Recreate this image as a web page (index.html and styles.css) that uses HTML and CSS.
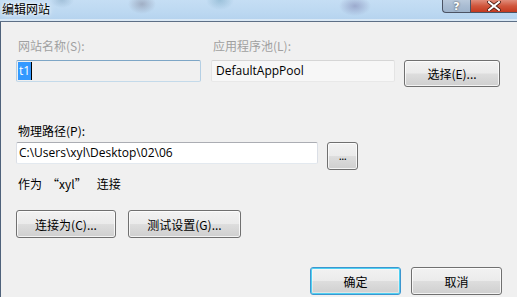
FILE: index.html
```html
<!DOCTYPE html>
<html lang="zh-CN">
<head>
<meta charset="utf-8">
<title>编辑网站</title>
<link rel="stylesheet" href="styles.css">
</head>
<body>
<div class="window">
  <div class="titlebar">
    <span class="title">编辑网站</span>
    <div class="caption-buttons">
      <div class="cap-btn cap-help">?</div>
      <div class="cap-btn cap-close">
        <svg width="14" height="10" viewBox="0 0 14 10"><path d="M2 1 L12 9 M12 1 L2 9" stroke="#4a1a10" stroke-width="3.6" stroke-linecap="square"/><path d="M2 1 L12 9 M12 1 L2 9" stroke="#ffffff" stroke-width="2" stroke-linecap="square"/></svg>
      </div>
    </div>
  </div>
  <div class="client">
    <div class="top-grid">
      <div class="label disabled">网站名称(S):</div>
      <div class="label disabled">应用程序池(L):</div>
      <div></div>
      <div class="textbox tb-disabled"><span class="sel">t1</span><span class="caret"></span></div>
      <div class="textbox tb-readonly">DefaultAppPool</div>
      <button class="btn btn-select">选择(E)...</button>
    </div>

    <div class="label path-label">物理路径(P):</div>
    <div class="path-row">
      <div class="textbox tb-path">C:\Users\xyl\Desktop\02\06</div>
      <button class="btn btn-browse"><span class="dots">...</span></button>
    </div>

    <div class="label connect-label">作为<span class="q-open">“</span>xyl<span class="q-close">”</span>连接</div>

    <div class="action-row">
      <button class="btn btn-connect">连接为(C)...</button>
      <button class="btn btn-test">测试设置(G)...</button>
    </div>

    <div class="footer">
      <button class="btn btn-ok btn-default">确定</button>
      <button class="btn btn-ok">取消</button>
    </div>
  </div>
</div>
</body>
</html>
```

FILE: styles.css
```css
* { box-sizing: border-box; }
html, body {
  margin: 0;
  padding: 0;
  width: 517px;
  height: 297px;
  overflow: hidden;
  background: #f0f0f0;
}
body {
  font-family: "Open Sans", "Noto Sans CJK SC", sans-serif;
  font-size: 12px;
  color: #000;
}
.window {
  width: 517px;
  height: 297px;
  display: flex;
  flex-direction: column;
}
.titlebar {
  height: 22px;
  flex: none;
  display: flex;
  align-items: flex-start;
  background:
    radial-gradient(ellipse 14px 10px at 142px 4px, rgba(120,120,140,0.45), rgba(120,120,140,0) 100%),
    radial-gradient(ellipse 16px 10px at 355px 6px, rgba(110,110,160,0.45), rgba(110,110,160,0) 100%),
    radial-gradient(ellipse 12px 8px at 62px 0px, rgba(100,140,170,0.35), rgba(100,140,170,0) 100%),
    radial-gradient(ellipse 14px 10px at 220px 0px, rgba(80,140,170,0.35), rgba(80,140,170,0) 100%),
    linear-gradient(#c5def4, #bcd8f1 60%, #b4d2ee);
  border-bottom: 1px solid #5d6f86;
  box-shadow: inset 0 -2px 0 #d9e8f5;
}
.title {
  margin-left: 2px;
  margin-top: 0;
  line-height: 17px;
  font-family: "Noto Sans CJK SC", sans-serif;
  font-size: 12px;
  color: #000;
  text-shadow: 0 0 6px #ffffff, 0 0 3px #ffffff;
}
.caption-buttons {
  margin-left: auto;
  display: flex;
  height: 13px;
}
.cap-btn {
  height: 13px;
  border: 1px solid #4b5364;
  border-top: none;
  display: flex;
  align-items: center;
  justify-content: center;
}
.cap-help {
  width: 28px;
  border-right: none;
  border-bottom-left-radius: 4px;
  background: linear-gradient(#b9c9db, #a9bcd2 50%, #9fb4cc);
  color: #ffffff;
  font-family: "DejaVu Sans", sans-serif;
  font-weight: bold;
  font-size: 11px;
  line-height: 11px;
  text-shadow: 0 0 2px #333;
}
.cap-close {
  width: 47px;
  border-right: none;
  background: linear-gradient(#e08c7a, #d0563c 50%, #c4391f);
}
.client {
  flex: 1;
  border-left: 1px solid #4f627b;
  background: #f0f0f0;
  padding: 16px 0 0 15px;
  display: flex;
  flex-direction: column;
}
.label {
  font-family: "Noto Sans CJK SC", sans-serif;
  font-size: 12px;
  line-height: 16px;
  height: 16px;
  padding-left: 2px;
  color: #000;
  white-space: nowrap;
  flex: none;
}
.label.disabled { color: #a0a0a0; }
.q-open { margin-left: 5px; }
.q-close { margin-right: 10px; }
.top-grid {
  display: grid;
  grid-template-columns: 185px 184px 96px;
  grid-template-rows: 16px 27px;
  column-gap: 10px;
  row-gap: 6px;
  align-items: start;
  flex: none;
}
.top-grid > .btn-select { margin-left: -1px; }
.textbox {
  height: 22px;
  line-height: 20px;
  padding-left: 3px;
  border: 1px solid #abadb3;
  border-left-color: #dbdfe6;
  border-right-color: #dbdfe6;
  border-bottom-color: #e3e9ef;
  border-radius: 2px;
  white-space: nowrap;
  overflow: hidden;
  font-family: "Open Sans", "Noto Sans CJK SC", sans-serif;
  font-size: 12px;
  display: flex;
  align-items: center;
}
.tb-disabled {
  background: #f0f0f0;
  border-color: #7ea6c6 #b4cfe4 #c4daea #b4cfe4;
  padding-left: 1px;
}
.sel {
  background: #3399ff;
  color: #fff;
  padding: 0 1px;
  line-height: 18px;
  height: 18px;
}
.caret {
  width: 1px;
  height: 18px;
  background: #000;
}
.tb-readonly {
  background: #f7f7f7;
  border-color: #d6d6d6 #e4e4e4 #e8e8e8 #e4e4e4;
  padding-left: 4px;
}
.tb-path {
  width: 302px;
  background: #ffffff;
  padding-left: 2px;
}
.path-label { margin-top: 36px; }
.path-row {
  display: flex;
  align-items: flex-start;
  gap: 9px;
  margin-top: 3px;
  flex: none;
}
.btn-browse {
  width: 31px;
  height: 28px;
  margin-top: -1px;
}
.dots {
  font-size: 11px;
  letter-spacing: -0.5px;
  position: relative;
  top: -1px;
}
.connect-label { margin-top: 6px; }
.action-row {
  display: flex;
  gap: 12px;
  margin-top: 18px;
  align-items: flex-start;
  flex: none;
}
.btn {
  height: 28px;
  flex: none;
  border: 1px solid #707070;
  border-radius: 3px;
  background: linear-gradient(#f2f2f2 0%, #ebebeb 48%, #dddddd 52%, #cfcfcf 100%);
  box-shadow: inset 0 0 0 1px rgba(255,255,255,0.75);
  font-family: "Noto Sans CJK SC", "Open Sans", sans-serif;
  font-size: 12px;
  color: #000;
  padding: 0;
  margin: 0;
  display: flex;
  align-items: center;
  justify-content: center;
  white-space: nowrap;
}
.btn-select { width: 96px; height: 27px; }
.btn-connect { width: 100px; }
.btn-test { width: 113px; }
.footer {
  display: flex;
  justify-content: flex-end;
  gap: 10px;
  padding-right: 15px;
  margin-top: 29px;
  flex: none;
}
.btn-ok { width: 91px; }
.btn-default {
  border-color: #3c96cf;
  box-shadow: inset 0 0 0 1px #4fd0f2, inset 0 0 0 2px rgba(255,255,255,0.4);
}
```
